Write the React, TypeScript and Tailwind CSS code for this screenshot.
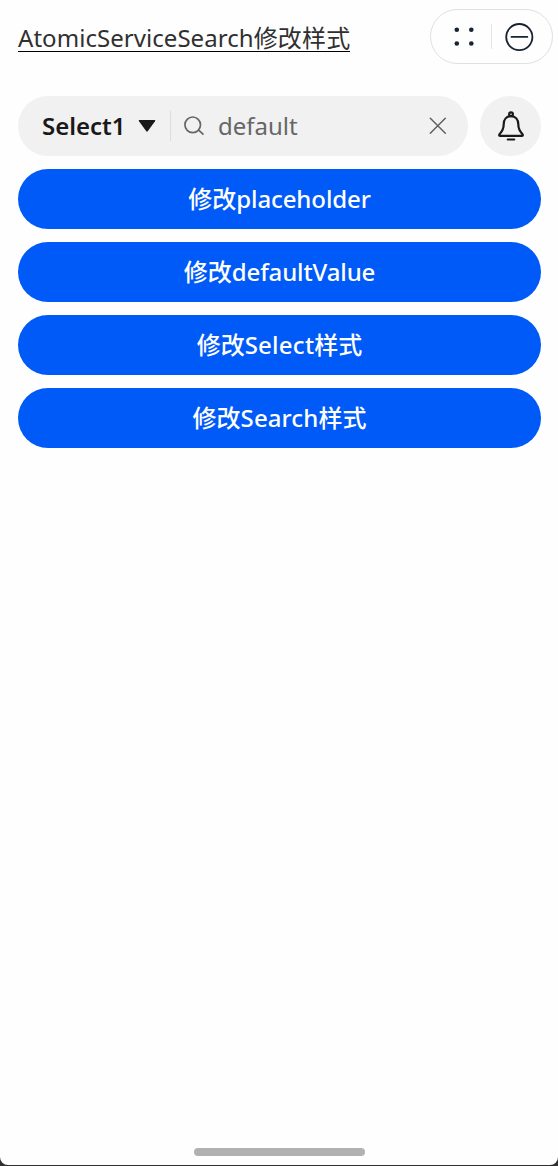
import React from "react";

type Label = { before: string; latin: string; after?: string; spacing: string };

const actions: Label[] = [
  { before: "修改", latin: "placeholder", spacing: "tracking-[-0.1px]" },
  { before: "修改", latin: "defaultValue", spacing: "tracking-[-0.12px]" },
  { before: "修改", latin: "Select", after: "样式", spacing: "tracking-[0.25px]" },
  { before: "修改", latin: "Search", after: "样式", spacing: "tracking-[0.1px]" },
];

const cjk = "font-['Noto_Sans_CJK_SC',sans-serif] -mt-[3px]";

function Header() {
  return (
    <header className="flex h-[55px] items-center justify-between pl-[18px] pr-[5px]">
      <h1 className="mt-[3px] flex h-[27px] items-center whitespace-nowrap border-b border-black text-[24px] leading-[28px] text-[#303030]">
        <span className="tracking-[0.05px]">AtomicServiceSearch</span>
        <span className="-mt-px font-['Noto_Sans_CJK_SC',sans-serif] tracking-[0.2px]">修改样式</span>
      </h1>
      <div className="flex h-[55px] w-[123px] items-center rounded-full border border-[#e0e0e0]">
        <svg width="60" height="52" viewBox="0 0 60 52" fill="#182431">
          <circle cx="25.8" cy="18.8" r="2.3" />
          <circle cx="40.3" cy="18.8" r="2.3" />
          <circle cx="25.8" cy="32.5" r="2.3" />
          <circle cx="40.3" cy="32.5" r="2.3" />
        </svg>
        <div className="h-[25px] w-px bg-[#e5e5e5]" />
        <svg width="60" height="52" viewBox="0 0 60 52" fill="none" stroke="#182431" strokeWidth="1.8" strokeLinecap="round">
          <circle cx="27.3" cy="26.1" r="13.1" />
          <path d="M19.5 25.9h15.8" />
        </svg>
      </div>
    </header>
  );
}

function SearchRow() {
  return (
    <div className="flex gap-3">
      <div className="flex h-[60px] w-[450px] items-center rounded-full bg-[#f1f1f1] pl-6">
        <span className="w-[96px] whitespace-nowrap text-[24px] font-semibold text-[#191919]">Select1</span>
        <svg width="18" height="14" viewBox="0 0 18 14" fill="#191919">
          <path d="M1.5 1h15q1.4 0 .5 1.3l-7.1 9.8q-.9 1.1-1.8 0L1 2.3Q.1 1 1.5 1Z" />
        </svg>
        <div className="ml-[14px] h-[30px] w-px bg-[#dddddd]" />
        <svg className="ml-3" width="24" height="24" viewBox="0 0 24 24" fill="none" stroke="#666" strokeWidth="1.7">
          <circle cx="9.7" cy="10.8" r="7.8" />
          <path d="m15.7 16.2 4.8 4.4" />
        </svg>
        <span className="ml-[11px] w-[211px] text-[24px] text-[#666]">default</span>
        <svg width="18" height="18" viewBox="0 0 18 18" fill="none" stroke="#606060" strokeWidth="1.5" strokeLinecap="round">
          <path d="m1.3 1.3 15 15M16.3 1.3l-15 15" />
        </svg>
      </div>
      <button className="flex h-[60px] w-[61px] items-center justify-center rounded-full bg-[#f1f1f1]">
        <svg width="28" height="32" viewBox="0 0 28 32" fill="none" stroke="#191919" strokeWidth="2.2" strokeLinecap="round" strokeLinejoin="round">
          <circle cx="14" cy="4.2" r="1.9" />
          <path d="M14 6.1c-4.5 0-7.3 3.4-7.3 8.1 0 4-.8 6.4-4 9.8-.9 1-.6 1.8.6 1.8h21.4c1.2 0 1.5-.8.6-1.8-3.2-3.4-4-5.8-4-9.8 0-4.7-2.8-8.1-7.3-8.1Z" />
          <path d="M10.8 29.5h6.4" />
        </svg>
      </button>
    </div>
  );
}

export default function App() {
  return (
    <div className="h-[1166px] w-[558px] overflow-hidden bg-[#303030] font-['Noto_Sans','Noto_Sans_CJK_SC',sans-serif]">
      <div className="flex h-[1165px] flex-col rounded-b-[8px] bg-[#fefefe] pt-[9px]">
        <Header />
        <main className="flex flex-1 flex-col gap-[13px] pl-[18px] pr-[17px] pt-[32px]">
          <SearchRow />
          {actions.map((a) => (
            <button
              key={a.latin}
              className="flex h-[60px] items-center justify-center whitespace-nowrap rounded-full bg-[#005af7] text-[24px] font-medium text-white"
            >
              <span className={cjk}>{a.before}</span>
              <span className={a.spacing}>{a.latin}</span>
              {a.after && <span className={cjk}>{a.after}</span>}
            </button>
          ))}
        </main>
        <div className="mb-[9px] ml-[194px] h-[8px] w-[171px] rounded-full bg-[#b1b1b1]" />
      </div>
    </div>
  );
}
